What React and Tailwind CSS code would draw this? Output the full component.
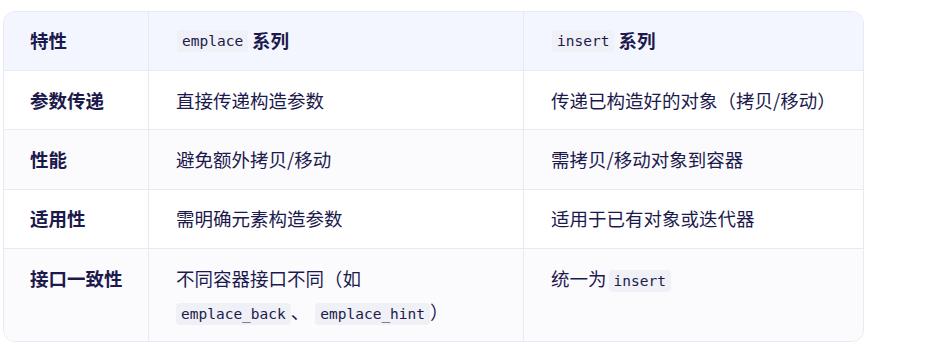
const rows = [
  {
    feature: '参数传递',
    emplace: ['直接传递构造参数'],
    insert: ['传递已构造好的对象（拷贝/移动）'],
  },
  {
    feature: '性能',
    emplace: ['避免额外拷贝/移动'],
    insert: ['需拷贝/移动对象到容器'],
  },
  {
    feature: '适用性',
    emplace: ['需明确元素构造参数'],
    insert: ['适用于已有对象或迭代器'],
  },
  {
    feature: '接口一致性',
    emplace: [
      '不同容器接口不同（如',
      <br key="br" />,
      <Code key="a">emplace_back</Code>,
      '、',
      <Code key="b" className="ml-1.5">emplace_hint</Code>,
      '）',
    ],
    insert: ['统一为', <Code key="c" className="ml-0.5">insert</Code>],
  },
];

function Code({ children, className = '' }) {
  return (
    <code
      className={`inline-block rounded-[4px] bg-[#eff1f6] px-[5px] leading-[22px] align-middle text-[14.5px] font-normal font-['DejaVu_Sans_Mono',monospace] ${className}`}
    >
      {children}
    </code>
  );
}

export default function App() {
  return (
    <div className="min-h-screen bg-white pl-[3px] pt-[11px] font-['Noto_Sans_CJK_SC','Noto_Sans',sans-serif] text-[18.5px] text-[#1c1a4c]">
      <div className="w-[861px] overflow-hidden rounded-[12px] border border-[#e8e9f1]">
        {/* header */}
        <div className="grid grid-cols-[144px_375px_1fr] bg-[#f3f6fe] font-bold">
          <div className="h-[58px] flex items-center pl-[26px]">特性</div>
          <div className="h-[58px] flex items-center pl-[28px] border-l border-[#e8e9f1]">
            <Code className="mr-1">emplace</Code>系列
          </div>
          <div className="h-[58px] flex items-center pl-[28px] border-l border-[#e8e9f1]">
            <Code className="mr-1">insert</Code>系列
          </div>
        </div>

        {rows.map((row, i) => (
          <div
            key={row.feature}
            className={`grid grid-cols-[144px_375px_1fr] border-t border-[#e8e9f1] leading-[33px] ${
              i % 2 === 1 ? 'bg-[#fbfbfe]' : 'bg-white'
            }`}
          >
            <div className="py-[12.7px] pl-[26px] font-bold">{row.feature}</div>
            <div className="py-[12.7px] pl-[27px] border-l border-[#e8e9f1]">{row.emplace}</div>
            <div className="py-[12.7px] pl-[27px] border-l border-[#e8e9f1]">{row.insert}</div>
          </div>
        ))}
      </div>
    </div>
  );
}
